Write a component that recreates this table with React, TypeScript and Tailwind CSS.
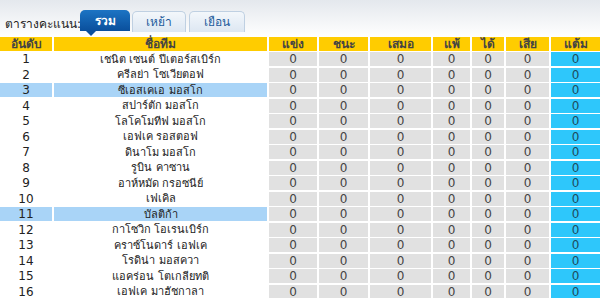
import React from 'react';

const TEAMS = [
  'เชนิต เซนต์ ปีเตอร์สเบิร์ก',
  'ครีลย่า โซเวียตอฟ',
  'ซีเอสเคเอ มอสโก',
  'สปาร์ตัก มอสโก',
  'โลโคโมทีฟ มอสโก',
  'เอฟเค รอสตอฟ',
  'ดินาโม มอสโก',
  'รูบิน คาซาน',
  'อาห์หมัด กรอซนีย์',
  'เฟเคิล',
  'บัลติก้า',
  'กาโซวิก โอเรนเบิร์ก',
  'คราซ์โนดาร์ เอฟเค',
  'โรดิน่า มอสควา',
  'แอคร่อน โตเกลียทติ',
  'เอฟเค มาฮัชกาลา',
];

const HIGHLIGHT = [3, 11];

const HEADERS = ['อันดับ', 'ชื่อทีม', 'แข่ง', 'ชนะ', 'เสมอ', 'แพ้', 'ได้', 'เสีย', 'แต้ม'];

const COLS = 'grid grid-cols-[52px_213px_48px_49px_61px_37px_32px_43px_1fr] gap-x-[2px]';

export default function App() {
  return (
    <div
      className="w-[600px] h-[298px] overflow-hidden bg-white text-[12px] leading-none"
      style={{ fontFamily: 'Tahoma, "DejaVu Sans", "Noto Sans", sans-serif' }}
    >
      {/* Tabs */}
      <div className="h-[37px] bg-gradient-to-b from-[#e4e8ed] to-white flex items-end">
        <div className="pl-[5px] pb-[7px] text-[#222] w-[80px] whitespace-nowrap overflow-hidden">ตารางคะแนน:</div>
        <div className="relative h-[21px] w-[50px] mb-[6px] rounded-t-[5px] bg-gradient-to-b from-[#1c74c4] to-[#0a4f9c] text-white font-bold flex items-center justify-center">
          รวม
          <span className="absolute left-[6px] -bottom-[5px] w-0 h-0 border-l-[5px] border-r-[5px] border-t-[5px] border-l-transparent border-r-transparent border-t-[#0a4f9c]" />
        </div>
        <div className="h-[21px] w-[54px] mb-[5px] ml-[2px] rounded-t-[5px] border border-b-0 border-[#bfd0e2] bg-gradient-to-b from-[#f3f7fb] to-[#dde7f2] text-[#1d5b9b] flex items-center justify-center">
          เหย้า
        </div>
        <div className="h-[21px] w-[56px] mb-[5px] ml-[3px] rounded-t-[5px] border border-b-0 border-[#bfd0e2] bg-gradient-to-b from-[#f3f7fb] to-[#dde7f2] text-[#1d5b9b] flex items-center justify-center">
          เยือน
        </div>
      </div>

      {/* Header */}
      <div className={`${COLS} h-[14px] mb-[1px]`}>
        {HEADERS.map((h) => (
          <div key={h} className="bg-[#ffcc00] text-[#444] font-bold flex items-center justify-center">
            {h}
          </div>
        ))}
      </div>

      {/* Rows */}
      <div className="flex flex-col gap-y-[1.5px]">
        {TEAMS.map((team, i) => {
          const hl = HIGHLIGHT.includes(i + 1);
          return (
            <div key={team} className={`${COLS} h-[14px]`}>
              <div className={`${hl ? 'bg-[#a9d4f7]' : 'bg-white'} text-[#222] flex items-center justify-center`}>{i + 1}</div>
              <div className={`${hl ? 'bg-[#a9d4f7]' : 'bg-white'} text-[#222] text-[11px] flex items-center justify-center whitespace-nowrap`}>{team}</div>
              {[0, 1, 2, 3, 4, 5].map((c) => (
                <div key={c} className="bg-[#e1e1e1] text-[#444] flex items-center justify-center">0</div>
              ))}
              <div className="bg-[#2ec7fb] text-[#1f4b5c] flex items-center justify-center">0</div>
            </div>
          );
        })}
      </div>
    </div>
  );
}
